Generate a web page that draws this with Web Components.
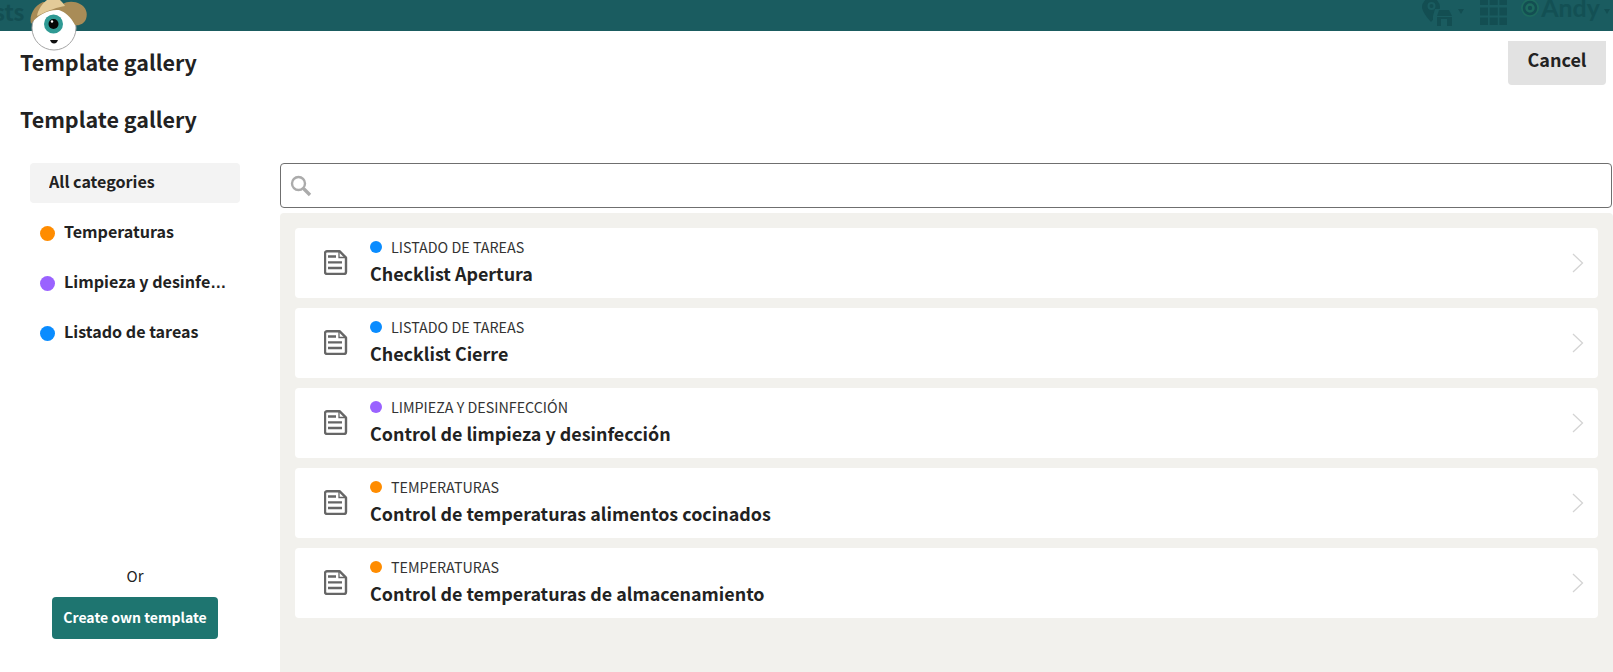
<!DOCTYPE html>
<html lang="en">
<head>
<meta charset="utf-8">
<title>Template gallery</title>
<style>
  html, body { margin: 0; height: 100%; overflow: hidden; background: #fff; }
  body { font-family: "Noto Sans CJK SC", "Noto Sans", sans-serif; color: #222; }
</style>
</head>
<body>
<gallery-page>
  <category-item slot="categories" active>All categories</category-item>
  <category-item slot="categories" color="#ff8c00">Temperaturas</category-item>
  <category-item slot="categories" color="#9a62ff">Limpieza y desinfección</category-item>
  <category-item slot="categories" color="#0a8cff">Listado de tareas</category-item>

  <template-row slot="rows" color="#0a8cff" label="LISTADO DE TAREAS">Checklist Apertura</template-row>
  <template-row slot="rows" color="#0a8cff" label="LISTADO DE TAREAS">Checklist Cierre</template-row>
  <template-row slot="rows" color="#9a62ff" label="LIMPIEZA Y DESINFECCIÓN">Control de limpieza y desinfección</template-row>
  <template-row slot="rows" color="#ff8c00" label="TEMPERATURAS">Control de temperaturas alimentos cocinados</template-row>
  <template-row slot="rows" color="#ff8c00" label="TEMPERATURAS">Control de temperaturas de almacenamiento</template-row>
</gallery-page>

<script>
class AppTopbar extends HTMLElement {
  constructor() {
    super();
    this.attachShadow({ mode: "open" });
    this.shadowRoot.innerHTML = `
      <style>
        :host { display: flex; align-items: flex-start; height: 31px; background: #1a5c60; color: #134e52; flex: none; position: relative; overflow: visible; }
        .crumb { font-size: 22px; font-weight: 700; line-height: 24px; margin: -1px 0 0 -6px; }
        .tools { margin-left: auto; display: flex; align-items: flex-start; }
        .arrow { width: 0; height: 0; border: 3.5px solid transparent; border-top: 5px solid #134e52; border-bottom: 0; flex: none; }
        .tools > svg { display: block; flex: none; }
        .andy { font: 700 25px/30px "Lato", sans-serif; margin: -8px 0 0 2px; color: #135054; }
        .mascot { position: absolute; left: 29px; top: 0; }
      </style>
      <span class="crumb">sts</span>
      <svg class="mascot" width="60" height="52" viewBox="0 0 60 52">
        <circle cx="25" cy="28" r="22" fill="#fff" stroke="#a5a5a5"/>
        <path d="M2 24C0 15 5 6 14 2L34 4C38 1 46 1 51 4C57 7 59 13 57 19C55 24 50 26 46 25C42 17 36 12 30 10C20 9 8 15 2 24Z" fill="#a98c57"/>
        <path d="M8 16C9 9 14 3 18 0H31C33 2 35 4 36 6C29 7 20 10 8 16Z" fill="#e3cb98"/>
        <circle cx="24.500" cy="24" r="9.500" fill="#2f9a94"/>
        <circle cx="24.500" cy="24" r="5" fill="#070707"/>
        <circle cx="23" cy="21.500" r="1.200" fill="#fff"/>
        <path d="M21 40h8c-1 2.500-2 3.500-4 3.500s-3-1-4-3.500z" fill="#111"/>
      </svg>
      <div class="tools">
        <svg width="31" height="27" viewBox="0 0 31 27">
          <path d="M9 -2a9 9 0 0 1 9 9c0 4-5 11-9 15C5 18 0 11 0 7a9 9 0 0 1 9-9z" fill="#134e52"/>
          <circle cx="9.500" cy="6" r="3" fill="none" stroke="#1a5c60" stroke-width="2"/>
          <path d="M14 9h-1l-2 7v11h19V16l-2-7z" fill="#1a5c60"/>
          <path d="M17 10h10l3 6H15z" fill="#134e52"/>
          <path d="M15 17h15v9H15zM19 19v7h6v-7z" fill="#134e52" fill-rule="evenodd"/>
        </svg>
        <span class="arrow" style="margin: 9px 0 0 5px"></span>
        <svg style="margin-left: 16px" width="27" height="25" viewBox="0 0 27 25" fill="#134e52">
          <rect width="8" height="5"/><rect x="9.700" width="8" height="5"/><rect x="19.400" width="8" height="5"/>
          <rect y="7.500" width="8" height="8"/><rect x="9.700" y="7.500" width="8" height="8"/><rect x="19.400" y="7.500" width="8" height="8"/>
          <rect y="17.500" width="8" height="7.500"/><rect x="9.700" y="17.500" width="8" height="7.500"/><rect x="19.400" y="17.500" width="8" height="7.500"/>
        </svg>
        <svg style="margin-left: 14px" width="18" height="18" viewBox="0 0 18 18">
          <circle cx="9" cy="8" r="9" fill="#1d6a5e"/>
          <circle cx="9" cy="8" r="6" fill="none" stroke="#134e52" stroke-width="2.500"/>
          <circle cx="9" cy="8" r="2.200" fill="#134e52"/>
        </svg>
        <span class="andy">Andy</span>
        <span class="arrow" style="margin: 9px 3px 0 4px"></span>
      </div>
    `;
  }
}

class CategoryItem extends HTMLElement {
  constructor() {
    super();
    this.attachShadow({ mode: "open" });
    const color = this.getAttribute("color");
    this.shadowRoot.innerHTML = `
      <style>
        :host { display: flex; align-items: center; height: 40px; margin-left: 30px; width: 210px; border-radius: 4px; box-sizing: border-box; padding: 0 10px; font-size: 16.100px; font-weight: 700; }
        :host([active]) { background: #f3f3f3; padding-left: 19px; }
        .dot { flex: none; width: 15px; height: 15px; border-radius: 50%; margin-right: 9px; }
        /* ellipsis takes the block's font, the CJK one centres its dots */
        .text { font-family: "Liberation Sans", sans-serif; white-space: nowrap; overflow: hidden; text-overflow: ellipsis; line-height: 24px; padding-bottom: 4px; }
        .inner { font-family: "Noto Sans CJK SC", sans-serif; }
      </style>
      ${color ? `<span class="dot" style="background:${color}"></span>` : ""}
      <div class="text"><span class="inner"><slot></slot></span></div>
    `;
  }
}

class TemplateRow extends HTMLElement {
  constructor() {
    super();
    this.attachShadow({ mode: "open" });
    const color = this.getAttribute("color");
    const label = this.getAttribute("label");
    this.shadowRoot.innerHTML = `
      <style>
        :host { display: flex; align-items: center; height: 70px; background: #fff; border-radius: 4px; flex: none; }
        .doc { flex: none; margin: -2px 22px 0 29px; display: block; }
        .body { flex: 1; min-width: 0; padding-bottom: 3px; }
        .label { display: flex; align-items: center; font-size: 14.300px; line-height: 20px; color: #333; }
        .dot { width: 12px; height: 12px; border-radius: 50%; margin-right: 9px; }
        .name { font-size: 17.900px; font-weight: 700; line-height: 26px; margin-top: 3px; }
        .chev { flex: none; display: block; margin-right: 14px; }
      </style>
      <svg class="doc" width="24" height="25" viewBox="0 0 24 25" fill="none" stroke="#666">
        <path d="M3 1.200h12.500l6.500 6.500V22a2 2 0 0 1-2 2H3a2 2 0 0 1-2-2V3.200a2 2 0 0 1 2-2z" stroke-width="2.400" stroke-linejoin="round"/>
        <path d="M15 2v5.500h6" stroke-width="1.300"/>
        <path d="M4 6.500h8M4 12.300h14M4 18h14" stroke-width="2.300"/>
      </svg>
      <div class="body">
        <div class="label"><span class="dot" style="background:${color}"></span>${label}</div>
        <div class="name"><slot></slot></div>
      </div>
      <svg class="chev" width="12" height="20" viewBox="0 0 12 20" fill="none" stroke="#d4d4d4" stroke-width="1.300">
        <path d="M1 1l9.500 9L1 19"/>
      </svg>
    `;
  }
}

class SearchBox extends HTMLElement {
  constructor() {
    super();
    this.attachShadow({ mode: "open" });
    this.shadowRoot.innerHTML = `
      <style>
        :host { display: flex; align-items: center; height: 45px; box-sizing: border-box; border: 1px solid #6f6f6f; border-radius: 4px; padding-left: 9px; flex: none; background: #fff; }
        svg { display: block; flex: none; }
        input { flex: 1; border: 0; outline: 0; background: none; font: inherit; }
      </style>
      <svg width="22" height="22" viewBox="0 0 22 22" fill="none" stroke="#ababab">
        <circle cx="8.500" cy="8.500" r="6.500" stroke-width="2.400"/>
        <path d="M13.500 13.500L20 20" stroke-width="3.400"/>
      </svg>
      <input type="text" aria-label="Search">
    `;
  }
}

class GalleryPage extends HTMLElement {
  constructor() {
    super();
    this.attachShadow({ mode: "open" });
    this.shadowRoot.innerHTML = `
      <style>
        :host { display: flex; flex-direction: column; height: 672px; overflow: hidden; }
        .head { display: flex; justify-content: space-between; align-items: flex-start; flex: none; padding: 10px 7px 0 20px; height: 54px; box-sizing: content-box; }
        h1, h2 { margin: 0; font-size: 21.500px; font-weight: 700; line-height: 32px; }
        h1 { margin-top: 5px; }
        h2 { margin: 8px 0 28px 20px; flex: none; }
        .cancel { width: 98px; height: 44px; border: 0; border-radius: 0 0 4px 4px; background: #e2e2e2; color: #222; font: 700 18px/24px "Noto Sans CJK SC", sans-serif; padding: 0 0 9px; }
        .main { flex: 1; display: flex; min-height: 0; }
        aside { width: 280px; flex: none; display: flex; flex-direction: column; gap: 10px; box-sizing: border-box; padding-bottom: 33px; }
        .foot { margin-top: auto; display: flex; flex-direction: column; align-items: center; font-size: 15px; padding-right: 10px; }
        .foot span { line-height: 20px; margin-bottom: 11px; }
        .create { width: 166px; height: 42px; border: 0; border-radius: 4px; background: #1e7570; color: #fff; font: 700 14px/20px "Noto Sans CJK SC", sans-serif; padding: 0 0 2px; }
        section { flex: 1; min-width: 0; display: flex; flex-direction: column; gap: 5px; padding-right: 1px; }
        .panel { flex: 1; background: #f2f1ed; border-radius: 4px 4px 0 0; padding: 15px 15px 0; display: flex; flex-direction: column; gap: 10px; margin-right: -1px; }
      </style>
      <app-topbar></app-topbar>
      <div class="head">
        <h1>Template gallery</h1>
        <button class="cancel">Cancel</button>
      </div>
      <h2>Template gallery</h2>
      <div class="main">
        <aside>
          <slot name="categories"></slot>
          <div class="foot">
            <span>Or</span>
            <button class="create">Create own template</button>
          </div>
        </aside>
        <section>
          <search-box></search-box>
          <div class="panel"><slot name="rows"></slot></div>
        </section>
      </div>
    `;
  }
}

customElements.define("app-topbar", AppTopbar);
customElements.define("category-item", CategoryItem);
customElements.define("template-row", TemplateRow);
customElements.define("search-box", SearchBox);
customElements.define("gallery-page", GalleryPage);
</script>
</body>
</html>
